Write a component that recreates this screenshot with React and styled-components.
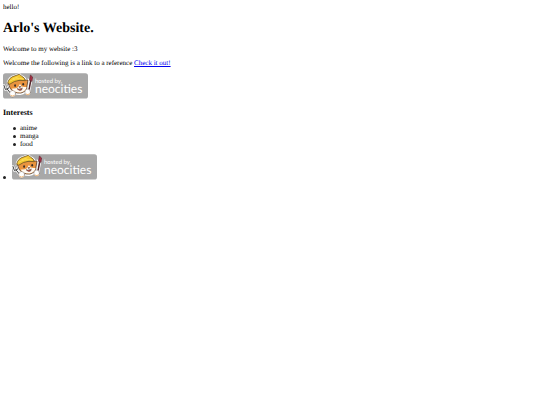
import React from "react";
import styled, { createGlobalStyle } from "styled-components";

const GlobalStyle = createGlobalStyle`
  body {
    margin: 3px;
    background: #fff;
    color: #000;
    font-family: "Liberation Serif", "Times New Roman", serif;
    font-size: 7px;
    line-height: 8px;
    text-rendering: geometricPrecision;
  }
`;

const Page = styled.main`
  display: flex;
  flex-direction: column;
  align-items: flex-start;
`;

const Title = styled.h1`
  margin: 10px 0 8px;
  font-size: 14px;
  line-height: 16px;
`;

const Paragraph = styled.p`
  margin: 0 0 6px;
`;

const Link = styled.a`
  color: #0000ee;
  text-decoration: underline;
`;

const BadgeLink = styled.a`
  display: inline-block;
  vertical-align: bottom;
`;

const BadgeArt = styled.svg`
  display: block;
  width: 85px;
  height: 26px;
  font-family: Lato, "Open Sans", sans-serif;
`;

const Heading = styled.h2`
  margin: 9px 0 7px;
  font-size: 8px;
  line-height: 9px;
`;

const List = styled.ul`
  margin: 0 0 6px;
  padding-left: ${({ $indent }) => $indent};
  list-style: none;
`;

const ListItem = styled.li`
  display: flex;
  align-items: ${({ $align }) => $align || "center"};
  gap: ${({ $gap }) => $gap || "4px"};

  &::before {
    content: "";
    width: 3px;
    height: 3px;
    border-radius: 50%;
    background: #222;
    margin-bottom: ${({ $align }) => ($align ? "1px" : "0")};
  }
`;

function Badge() {
  return (
    <BadgeLink href="https://neocities.org" aria-label="Hosted by Neocities">
      <BadgeArt viewBox="0 0 85 26" aria-hidden="true">
        <rect y="0.3" width="85" height="25.2" rx="2.6" fill="#a8a8a8" />
        <g strokeLinecap="round" strokeLinejoin="round">
          <path d="M1 12.5 2.4 16.5 5.8 15.2 4.8 11.5M4.2 16 8.5 21.5" fill="none" stroke="#fff" strokeWidth="2.4" />
          <path d="M1 12.5 2.4 16.5 5.8 15.2 4.8 11.5M4.2 16 8.5 21.5" fill="none" stroke="#3b3b3b" strokeWidth="1" />
          <path d="M28 6.5 25.5 19" fill="none" stroke="#fff" strokeWidth="3" />
          <path d="M28 6.5 25.5 19" fill="none" stroke="#54252a" strokeWidth="1.5" />
          <path d="M26.5 7 27.4 2 29.6 4 29.1 8Z" fill="#a52f43" stroke="#5a2630" strokeWidth=".6" />
          <path d="M4.7 9Q6 4 12 2.5L16.5 1 18.3 2.8Q22 4.2 22.8 7.2L25.2 6.5 24.5 14Q23.5 20 17 21.2 9.4 21 7 16Z" fill="#fff" stroke="#fff" strokeWidth="1.8" />
          <path d="M5.5 10 7.5 8 20.5 7 25 7 24 13Q24.3 18 18 20 10.5 20.7 7.3 15.5Z" fill="#e9943f" stroke="#51382a" strokeWidth=".8" />
          <path d="M9.5 15.3Q12.5 16 15 14.2L17 11 18.5 13.5Q21.5 14 23.5 14 22.8 18.3 17.5 19.4 11.5 19.5 9.2 16.5Z" fill="#fffaf2" />
          <path d="M4.7 10Q5.5 4.5 12 2.8L16.5 1.2 18.3 3Q22 4.5 22.3 7.7L17 7.2Q11.2 7.7 7 11Z" fill="#f3c52f" stroke="#6d5325" strokeWidth=".8" />
          <path d="M6.7 8.2Q12 4.8 20 5.8M9.8 5.7 15 3.9" fill="none" stroke="#ffe45f" strokeWidth=".8" />
          <ellipse cx="12.1" cy="12.6" rx=".9" ry="1.3" fill="#332b29" />
          <ellipse cx="20.2" cy="11.3" rx=".9" ry="1.3" fill="#332b29" />
          <path d="m16.2 13.8 1.6-.4-.7 1-.9-.6m.7.8.2.8m-2.8.5q2.6 1.2 5-1l-.7 2.1q-2.2 1.4-4.3-1.1Z" fill="#ca4f42" stroke="#49302a" strokeWidth=".5" />
          <ellipse cx="9.6" cy="20.8" rx="3" ry="3.3" fill="#fff" stroke="#73665e" strokeWidth=".4" />
          <ellipse cx="24.7" cy="19.3" rx="2.8" ry="3.2" fill="#fff" stroke="#73665e" strokeWidth=".4" />
          <path d="M8 22.6Q9.6 23.9 11.3 22.5M23.2 21.2Q25 22.5 26.5 20.9" fill="none" stroke="#eead62" strokeWidth=".9" />
        </g>
        <text x="32" y="10" fill="#fff" fontSize="6">hosted by,</text>
        <text x="32" y="20" fill="#fff" fontSize="12">neocities</text>
      </BadgeArt>
    </BadgeLink>
  );
}

export default function App() {
  return (
    <>
      <GlobalStyle />
      <Page>
        <div>hello!</div>
        <Title>Arlo's Website.</Title>
        <Paragraph>Welcome to my website :3</Paragraph>
        <Paragraph>
          Welcome the following is a link to a reference <Link href="#reference">Check it out!</Link>
        </Paragraph>
        <Badge />
        <Heading>Interests</Heading>
        <List $indent="10px">
          <ListItem>anime</ListItem>
          <ListItem>manga</ListItem>
          <ListItem>food</ListItem>
        </List>
        <List $indent="0">
          <ListItem $align="flex-end" $gap="6px"><Badge /></ListItem>
        </List>
      </Page>
    </>
  );
}
